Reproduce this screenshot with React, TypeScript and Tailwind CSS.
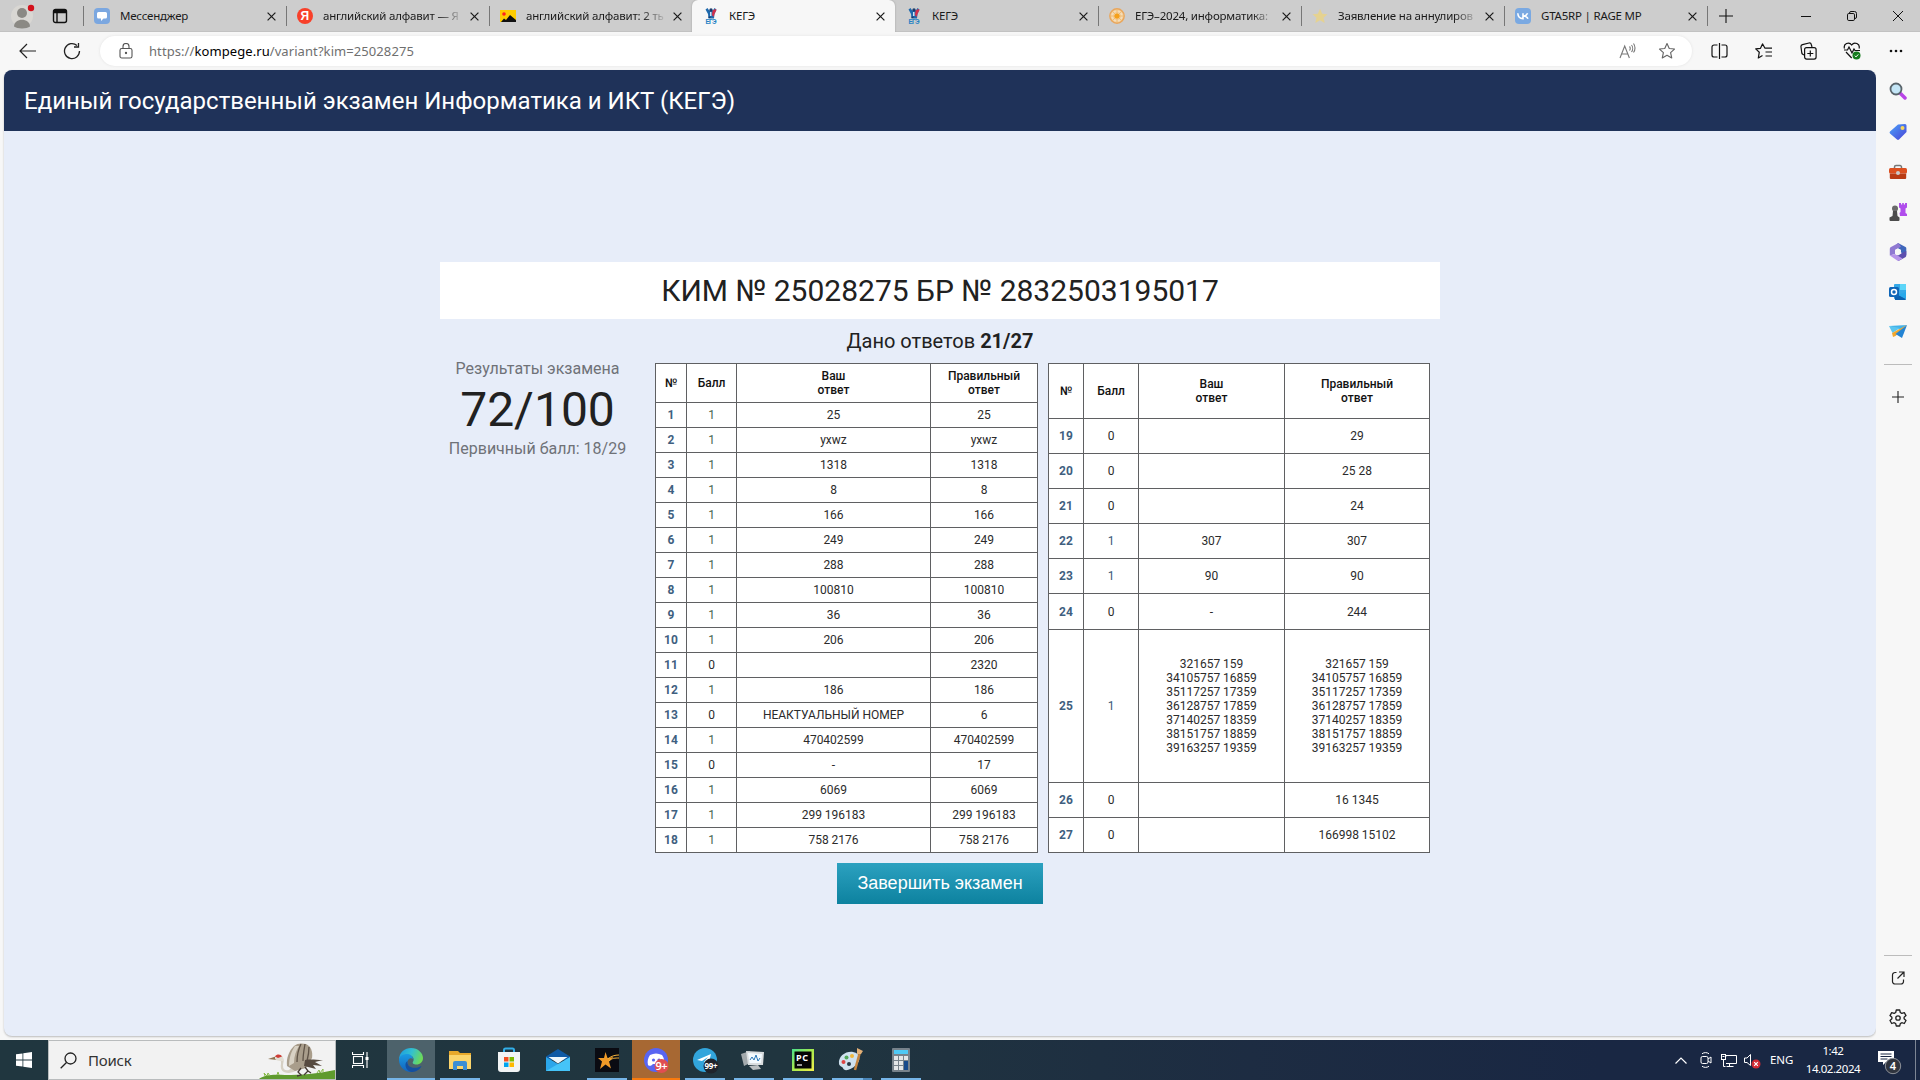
import React from "react";

type Row = [number, number, string, string];

const leftRows: Row[] = [
  [1, 1, "25", "25"],
  [2, 1, "yxwz", "yxwz"],
  [3, 1, "1318", "1318"],
  [4, 1, "8", "8"],
  [5, 1, "166", "166"],
  [6, 1, "249", "249"],
  [7, 1, "288", "288"],
  [8, 1, "100810", "100810"],
  [9, 1, "36", "36"],
  [10, 1, "206", "206"],
  [11, 0, "", "2320"],
  [12, 1, "186", "186"],
  [13, 0, "НЕАКТУАЛЬНЫЙ НОМЕР", "6"],
  [14, 1, "470402599", "470402599"],
  [15, 0, "-", "17"],
  [16, 1, "6069", "6069"],
  [17, 1, "299 196183", "299 196183"],
  [18, 1, "758 2176", "758 2176"],
];

const long25 =
  "321657 159\n34105757 16859\n35117257 17359\n36128757 17859\n37140257 18359\n38151757 18859\n39163257 19359";

const rightRows: Row[] = [
  [19, 0, "", "29"],
  [20, 0, "", "25 28"],
  [21, 0, "", "24"],
  [22, 1, "307", "307"],
  [23, 1, "90", "90"],
  [24, 0, "-", "244"],
  [25, 1, long25, long25],
  [26, 0, "", "16 1345"],
  [27, 0, "", "166998 15102"],
];

function Cell({ children, className = "" }: { children?: React.ReactNode; className?: string }) {
  return (
    <div className={`flex items-center justify-center whitespace-pre-line border-r border-b border-[#5f6062] text-center ${className}`}>
      {children}
    </div>
  );
}

function ResultTable({ rows, grid, scoreOne }: { rows: Row[]; grid: string; scoreOne: string }) {
  return (
    <div className={`grid border-t border-l border-[#5f6062] bg-white text-[12px] leading-[14px] text-[#2b2b2b] ${grid}`}>
      <Cell className="font-medium text-[#111]">№</Cell>
      <Cell className="font-medium text-[#111]">Балл</Cell>
      <Cell className="font-medium text-[#111]">{"Ваш\nответ"}</Cell>
      <Cell className="font-medium text-[#111]">{"Правильный\nответ"}</Cell>
      {rows.map(([n, score, given, right]) => (
        <React.Fragment key={n}>
          <Cell className="font-bold text-[#3f5f80]">{n}</Cell>
          <Cell className={score ? scoreOne : ""}>{score}</Cell>
          <Cell>{given}</Cell>
          <Cell>{right}</Cell>
        </React.Fragment>
      ))}
    </div>
  );
}

function CloseX() {
  return (
    <svg width="9" height="9" viewBox="0 0 9 9" stroke="#1a1a1a" strokeWidth="1.200" className="shrink-0">
      <path d="M.6.6l7.800 7.800M8.400.6L.6 8.400" />
    </svg>
  );
}

function KegeIcon() {
  return (
    <svg width="16" height="16" viewBox="0 0 16 16">
      <path d="M2.500 1.500L4.500 0l1.700 2.500h3.600L11.500 0l2 1.500-2 4.500-.5 4.500H5.500L5 6z" fill="#1e69ad" />
      <path d="M9.500 2.500L12.500 1l1 1-2 4-.8 3-1.700-2z" fill="#d2304c" />
      <circle cx="8" cy="1.900" r="1.700" fill="#1a3c6c" />
      <path d="M7 4h1.500v4H7z" fill="#cfe3f3" />
      <path d="M5.500 8.500h2V10h-2z" fill="#173a6b" />
      <text x="8" y="16" fontSize="6.500" fontWeight="700" textAnchor="middle" fill="#2480c4" fontFamily="Liberation Sans, sans-serif" textLength="11">ЕГЭ</text>
    </svg>
  );
}

const tabIcons: Record<string, React.ReactNode> = {
  msg: (
    <svg width="16" height="16" viewBox="0 0 16 16">
      <rect width="16" height="16" rx="4" fill="#7ba7e0" />
      <path d="M4.500 4h7A1.500 1.500 0 0113 5.500v3.500a1.500 1.500 0 01-1.500 1.500H9.500L7 13v-2.500H4.500A1.500 1.500 0 013 9V5.500A1.500 1.500 0 014.500 4z" fill="#fff" />
    </svg>
  ),
  ya: (
    <svg width="16" height="16" viewBox="0 0 16 16">
      <circle cx="8" cy="8" r="8" fill="#f8402a" />
      <text x="7.700" y="12.300" fontSize="12" fontWeight="700" textAnchor="middle" fill="#fff" fontFamily="Liberation Sans, sans-serif">Я</text>
    </svg>
  ),
  pic: (
    <svg width="16" height="16" viewBox="0 0 16 16">
      <rect y="2" width="16" height="12" fill="#fc0" />
      <path d="M1 14l3-3.500 2 1.500 4-5 6 5v2z" fill="#111" />
      <circle cx="4" cy="6" r="1.800" fill="#f22" />
    </svg>
  ),
  kege: <KegeIcon />,
  wheel: (
    <svg width="16" height="16" viewBox="0 0 16 16">
      <circle cx="8" cy="8" r="7.200" fill="#f3cf9c" stroke="#e9a65c" strokeWidth="1.400" />
      <circle cx="8" cy="8" r="5" fill="none" stroke="#f6dfbd" strokeWidth="1.200" />
      <g stroke="#efb565" strokeWidth=".8">
        <path d="M8 1v14M1 8h14M3 3l10 10M13 3L3 13" />
      </g>
      <circle cx="8" cy="8" r="2.600" fill="#f5a01a" />
    </svg>
  ),
  star: (
    <svg width="16" height="16" viewBox="0 0 16 16">
      <path d="M8 .8l2.200 4.900 5.300.5-4 3.600 1.200 5.300L8 12.300l-4.700 2.800 1.200-5.300-4-3.600 5.300-.5z" fill="#e5d291" />
    </svg>
  ),
  vk: (
    <svg width="16" height="16" viewBox="0 0 16 16">
      <rect width="16" height="16" rx="4" fill="#7aa9e2" />
      <path d="M2.800 5.300c.2 3.500 1.800 5.400 5.200 5.400V5.300M12.600 5.300C11.800 7.200 10 8 8.500 8c2 0 3.700 1 4.500 2.800" fill="none" stroke="#fff" strokeWidth="1.600" />
    </svg>
  ),
};

const tabs = [
  { icon: "msg", title: "Мессенджер" },
  { icon: "ya", title: "английский алфавит — Я", fade: true },
  { icon: "pic", title: "английский алфавит: 2 ть", fade: true },
  { icon: "kege", title: "КЕГЭ", active: true },
  { icon: "kege", title: "КЕГЭ" },
  { icon: "wheel", title: "ЕГЭ–2024, информатика:", fade: true },
  { icon: "star", title: "Заявление на аннулиров", fade: true },
  { icon: "vk", title: "GTA5RP | RAGE MP" },
];

function TabBar() {
  return (
    <div className="flex h-8 shrink-0 bg-[#cdcdcd] shadow-[inset_0_-1px_0_#c2c2c2]">
      <div className="flex w-[83px] items-center">
        <svg width="24" height="24" viewBox="0 0 24 24" className="ml-[10px] mt-px overflow-visible">
          <circle cx="12" cy="11" r="11" fill="#d9d7d3" />
          <circle cx="12" cy="8" r="5" fill="#8b8984" />
          <path d="M4 21.500c0-9 16-9 16 0-3 2.500-13 2.500-16 0z" fill="#8b8984" />
          <circle cx="21" cy="3" r="3.200" fill="#d3101c" />
        </svg>
        <svg width="16" height="16" viewBox="0 0 16 16" className="ml-[18px]" fill="none" stroke="#111" strokeWidth="1.400">
          <rect x="1.500" y="1.500" width="13" height="13" rx="2" />
          <path d="M2 3.500h12" strokeWidth="3.500" />
          <path d="M5 4v10" />
        </svg>
      </div>
      {tabs.map((t, i) => (
        <div
          key={i}
          className={`flex w-[203px] items-center pl-[11px] pr-[10px] ${
            t.active
              ? "rounded-t-[6px] bg-[#f7f7f7] shadow-[0_0_2px_#999]"
              : i === 4
                ? ""
                : "bg-[linear-gradient(#777,#777)] bg-[length:1px_20px] bg-[position:0_6px] bg-no-repeat"
          }`}
        >
          <span className="flex w-4 shrink-0 justify-center">{tabIcons[t.icon]}</span>
          <span
            className={`ml-[10px] w-[144px] whitespace-nowrap font-['Noto_Sans'] text-[11.5px] leading-4 tracking-[-0.2px] text-[#1a1a1a] ${
              t.fade ? "[mask-image:linear-gradient(to_right,#000_116px,transparent_141px)]" : ""
            }`}
          >
            {t.title}
          </span>
          <span className="ml-auto">
            <CloseX />
          </span>
        </div>
      ))}
      <div className="flex grow items-center bg-[linear-gradient(#777,#777)] bg-[length:1px_20px] bg-[position:0_6px] bg-no-repeat pl-[12px]">
        <svg width="14" height="14" viewBox="0 0 14 14" stroke="#111" strokeWidth="1.100">
          <path d="M7 0v14M0 7h14" />
        </svg>
        <svg width="10" height="10" viewBox="0 0 10 10" stroke="#111" className="ml-[68px]">
          <path d="M0 5.500h10" />
        </svg>
        <svg width="10" height="10" viewBox="0 0 10 10" fill="none" stroke="#111" className="ml-[36px]">
          <rect x=".5" y="2.500" width="7" height="7" rx="1.300" />
          <path d="M2.500 2.500V2A1.500 1.500 0 014 .5h3.500a2 2 0 012 2V6A1.500 1.500 0 018 7.500h-.5" />
        </svg>
        <svg width="10" height="10" viewBox="0 0 10 10" stroke="#111" className="ml-[36px]">
          <path d="M0 0l10 10M10 0L0 10" />
        </svg>
      </div>
    </div>
  );
}

function AddressBar() {
  return (
    <div className="flex h-[38px] shrink-0 items-center bg-[#f7f7f7]">
      <svg width="18" height="16" viewBox="0 0 18 16" fill="none" stroke="#222" strokeWidth="1.200" className="ml-[19px]">
        <path d="M17 8H1.500M8 1L1 8l7 7" />
      </svg>
      <svg width="18" height="18" viewBox="0 0 18 18" fill="none" stroke="#222" strokeWidth="1.300" className="ml-[26px]">
        <path d="M16.500 9A7.500 7.500 0 1114 3.500M15.500 1v4h-4.500" />
      </svg>
      <div className="ml-[19px] flex h-[30px] w-[1592px] items-center rounded-full bg-white shadow-[0_0_3px_#e2e2e2]">
        <svg width="14" height="16" viewBox="0 0 14 16" fill="none" stroke="#555" strokeWidth="1.100" className="ml-[19px]">
          <rect x="1" y="5.500" width="12" height="9.500" rx="1.800" />
          <path d="M4 5.500V3.500a3 3 0 016 0v2" />
          <circle cx="7" cy="10" r=".6" fill="#555" />
        </svg>
        <span className="ml-4 font-['Noto_Sans'] text-[13px] leading-4 tracking-[0.080px] text-[#6f6f6f]">
          https://<span className="text-black">kompege.ru</span>/variant?kim=25028275
        </span>
        <svg width="17" height="16" viewBox="0 0 17 16" fill="none" stroke="#777" strokeWidth="1.100" className="ml-auto">
          <path d="M1 15L5.700 3l4.700 12M2.600 11h6.200M10.500 3.500c1 1 1 3 0 4M12.500 2c1.500 1.800 1.500 5 0 7M14.500.5c2 2.500 2 6.500 0 9" />
        </svg>
        <svg width="18" height="18" viewBox="0 0 24 24" fill="none" stroke="#666" strokeWidth="1.500" strokeLinejoin="round" className="ml-[22px] mr-[16px]">
          <path d="M12 2l3 6.600 7 .8-5.200 4.800 1.500 7.100L12 17.700l-6.300 3.600 1.500-7.100L2 9.400l7-.8z" />
        </svg>
      </div>
      <div className="flex grow items-center pl-[19px]">
        <svg width="17" height="16" viewBox="0 0 17 16" fill="none" stroke="#111" strokeWidth="1.200">
          <path d="M8.500 0v16M6.500 2H3a2 2 0 00-2 2v8a2 2 0 002 2h3.500M10.500 2H14a2 2 0 012 2v8a2 2 0 01-2 2h-3.500" />
        </svg>
        <svg width="18" height="16" viewBox="0 0 18 16" fill="none" stroke="#111" strokeWidth="1.200" strokeLinejoin="round" className="ml-[27px]">
          <path d="M10 5.200L7.500.9 5.500 5.300l-4.800.6 3.600 3.300L3.300 15l4.200-2.500M9.500 5.200H17M10.500 9H17M10.500 13H17" />
        </svg>
        <svg width="17" height="18" viewBox="0 0 17 18" fill="none" stroke="#111" strokeWidth="1.200" className="ml-[27px]">
          <rect x="4.600" y="5.600" width="11.500" height="11.500" rx="2" />
          <path d="M10.300 8.500v6M7.300 11.500h6M4 13l-1.300-.8a2 2 0 01-.9-1.200L1 5a2 2 0 011.500-2.300L9 1a2 2 0 012.300 1.500L12 5" />
        </svg>
        <svg width="19" height="20" viewBox="0 0 19 20" fill="none" stroke="#111" strokeWidth="1.200" className="ml-[26px]">
          <path d="M1.500 7.500C0 3 6 0 8.700 4c2.700-4 8.800-1 7.300 3.500M3 11l5.700 6M1 9h3.500l1.500-3 3 6 2-4 1 1.500h5" />
          <circle cx="13.500" cy="14.500" r="4" fill="#137c1c" stroke="none" />
          <path d="M11.800 14.700l1.200 1.200 2.300-2.500" stroke="#fff" strokeWidth="1" />
        </svg>
        <svg width="14" height="4" viewBox="0 0 14 4" fill="#111" className="ml-[27px]">
          <circle cx="2" cy="2" r="1.300" />
          <circle cx="7" cy="2" r="1.300" />
          <circle cx="12" cy="2" r="1.300" />
        </svg>
      </div>
    </div>
  );
}

function Slot({ children }: { children: React.ReactNode }) {
  return <div className="flex h-10 items-center justify-center">{children}</div>;
}

function EdgeSidebar() {
  return (
    <div className="flex w-11 flex-col bg-[#f7f7f7] pt-[2px]">
      <Slot>
        <svg width="18" height="18" viewBox="0 0 18 18" className="-mt-[2px] mr-px">
          <path d="M11 11l5 5" stroke="#b844e6" strokeWidth="3.500" strokeLinecap="round" />
          <circle cx="7" cy="7" r="5.500" fill="#c4e6f7" stroke="#59646b" strokeWidth="1.800" />
        </svg>
      </Slot>
      <Slot>
        <svg width="18" height="18" viewBox="0 0 18 18">
          <defs>
            <linearGradient id="tag" x1="0" y1="0" x2="1" y2="1">
              <stop offset="0" stopColor="#4ba3fa" />
              <stop offset="1" stopColor="#4b42d6" />
            </linearGradient>
          </defs>
          <path d="M9 1.500L16 1a1.500 1.500 0 011.500 1.500V9L10 16.500a1.500 1.500 0 01-2 0L1 10.500a1.500 1.500 0 010-2z" fill="url(#tag)" />
          <circle cx="13.500" cy="5" r="2" fill="#f9d65b" />
        </svg>
      </Slot>
      <Slot>
        <svg width="18" height="16" viewBox="0 0 18 16">
          <path d="M5.500 4.500V3A1.500 1.500 0 017 1.500h4A1.500 1.500 0 0112.500 3v1.500" fill="none" stroke="#777" strokeWidth="1.500" />
          <rect y="4" width="18" height="5.500" rx="1.500" fill="#dc5020" />
          <path d="M.8 9.500h16.400V14a1 1 0 01-1 1H1.800a1 1 0 01-1-1z" fill="#b93b14" />
          <circle cx="9" cy="9" r="2" fill="#ccc" />
        </svg>
      </Slot>
      <Slot>
        <svg width="18" height="18" viewBox="0 0 18 18">
          <path d="M10 0h2v1.500h1.200V0h1.600v1.500H16V0h2v4.500l-1.500 1V10l1.500 1v2h-7l-.5-3 1-1V5.500l-1.500-1z" fill="#b04dec" />
          <circle cx="6" cy="5.500" r="3" fill="#6a6a6a" />
          <path d="M4 8h4l.5 5 2 1.500V17a1 1 0 01-1 1h-8a1 1 0 01-1-1v-2.500l3-1.500z" fill="#4b4b4b" />
        </svg>
      </Slot>
      <Slot>
        <svg width="18" height="18" viewBox="0 0 18 18">
          <path d="M9 0l7.500 4a1.500 1.500 0 01.8 1.300V12L12 9.500V7L5.500 4z" fill="#3f66bb" />
          <path d="M9.500 0L2 4a2 2 0 00-1.200 2v6.500L6 11V7l6-3.300z" fill="#8f79d2" />
          <path d="M17.300 8v4.500a2 2 0 01-1 1.700L9.500 18 6 13l6-2.500z" fill="#5c4fae" />
          <path d="M.8 12.500L9 18l4.500-2.600L6 11z" fill="#b794ea" />
          <path d="M6 7l3-1.700L12 7v3.800l-3 1.700-3-1.700z" fill="#f7f7f7" />
        </svg>
      </Slot>
      <Slot>
        <svg width="18" height="18" viewBox="0 0 18 18">
          <rect x="5" y="1" width="12" height="15" rx="1" fill="#35a9e8" />
          <path d="M11 1h6v6h-6z" fill="#5cd5f8" />
          <path d="M5 9l12 7a1 1 0 01-1 1H6z" fill="#0a60af" />
          <path d="M17 9v7L9 12z" fill="#28a8ea" />
          <rect y="4" width="10" height="10" rx="1.500" fill="#0f66b8" />
          <circle cx="5" cy="9" r="2.500" fill="none" stroke="#fff" strokeWidth="1.500" />
        </svg>
      </Slot>
      <Slot>
        <svg width="18" height="16" viewBox="0 0 18 16">
          <path d="M0 2l18-1-6.500 5z" fill="#43b2ea" />
          <path d="M0 2l11 2-7.500 5z" fill="#5bc5ef" />
          <path d="M3 9L18 1 6.500 12 4 13z" fill="#f2a72e" />
          <path d="M18 1l-5 13-6.500-4z" fill="#2384d4" />
        </svg>
      </Slot>
      <div className="mx-2 mt-[12px] h-px bg-[#bcbcbc]" />
      <div className="mt-[26px] flex justify-center">
        <svg width="12" height="12" viewBox="0 0 12 12" stroke="#222" strokeWidth="1.100">
          <path d="M6 0v12M0 6h12" />
        </svg>
      </div>
      <div className="mx-2 mt-auto h-px bg-[#bcbcbc]" />
      <div className="mt-[2px]">
        <Slot>
          <svg width="14" height="14" viewBox="0 0 14 14" fill="none" stroke="#222" strokeWidth="1.200">
            <path d="M5.500 1.500H4A2.500 2.500 0 001.500 4v6.500A2.500 2.500 0 004 13h6a2.500 2.500 0 002.500-2.500V8.500M8 1h5v5M13 1L6.500 7.500" />
          </svg>
        </Slot>
        <Slot>
          <svg width="18" height="18" viewBox="0 0 18 18" fill="none" stroke="#222" strokeWidth="1.300" strokeLinejoin="round">
            <path d="M7.300 1h3.400l.6 2.500 1.500.9 2.500-.8 1.700 3-1.900 1.700v1.500l1.900 1.700-1.700 3-2.500-.8-1.500.9-.6 2.400H7.300l-.6-2.400-1.500-.9-2.500.8-1.700-3 1.900-1.700V8.300L1 6.600l1.700-3 2.500.8 1.500-.9z" />
            <circle cx="9" cy="9" r="2.200" />
          </svg>
        </Slot>
      </div>
      <div className="h-[2px]" />
    </div>
  );
}

function ExamPage() {
  return (
    <div className="ml-1 flex h-[966px] w-[1872px] flex-col overflow-hidden rounded-[8px] bg-[#e7edf9] font-['Roboto'] shadow-[0_1px_2px_#bbb]">
      <header className="flex h-[61px] shrink-0 items-center bg-[#1f3259] pl-5 text-[24px] text-white">
        Единый государственный экзамен Информатика и ИКТ (КЕГЭ)
      </header>
      <main className="mx-auto mt-[131px] flex w-[1000px] flex-col">
        <h1 className="flex h-[57px] items-center justify-center bg-white text-[30px] text-[#212121]">
          КИМ № 25028275 БР № 2832503195017
        </h1>
        <p className="flex h-[44px] items-center justify-center whitespace-pre text-[20px] text-[#212121]">
          Дано ответов <b className="font-bold">21/27</b>
        </p>
        <div className="flex">
          <section className="flex w-[215px] flex-col items-center pr-[20px] text-[16px] text-[#6f7278]">
            <div className="-mt-[3px] leading-[18px]">Результаты экзамена</div>
            <div className="mt-[4px] text-[48px] leading-[56px] text-[#212121]">72/100</div>
            <div className="mt-[2px] leading-[18px]">Первичный балл: 18/29</div>
          </section>
          <ResultTable
            rows={leftRows}
            scoreOne="text-[#49674f]"
            grid="grid-cols-[31px_50px_194px_107px] grid-rows-[39px_repeat(18,25px)]"
          />
          <div className="w-[10px]" />
          <ResultTable
            rows={rightRows}
            scoreOne="text-[#3d5a78]"
            grid="grid-cols-[35px_55px_146px_145px] grid-rows-[55px_repeat(5,35px)_36px_153px_35px_35px]"
          />
        </div>
        <button className="mx-auto mt-[10px] h-[41px] w-[206px] bg-[linear-gradient(#2ca1c0,#0d829f)] pb-px font-['Liberation_Sans'] text-[18px] text-white">
          Завершить экзамен
        </button>
      </main>
    </div>
  );
}

function Crane() {
  return (
    <svg width="76" height="38" viewBox="0 0 76 38">
      <path d="M0 38c4-4 14-5 26-4 16 0 32-1 50-5v9z" fill="#5f9a2e" />
      <path d="M6 35l-1-3 3 3 1-3 2 3M18 34l1-3 1 3M58 32l2-3 1 3 3-4 0 3" stroke="#86b847" fill="none" />
      <path d="M9 18l9-3v4z" fill="#8d7350" />
      <path d="M23 16c3 2 1 6 1 9 0 4 3 5 6 4 3-2 5-7 10-9l5 4c-4 4-9 7-15 8-7 0-9-4-8-9 0-3 0-4-2-5z" fill="#d6d0c4" />
      <path d="M16 16c2-3 6-3 8 0v4c-3 0-6 0-8-2z" fill="#e2ddd3" />
      <path d="M16 15.500c2-3 6-2 7 0l-4 1.500z" fill="#cf3d36" />
      <path d="M28 25c-1-8 2-15 7-20 3-3 8-3 12-2 5 2 7 8 6 14l-6 10-11 3z" fill="#a99d8b" />
      <path d="M36 5c-4 6-6 12-6 20l5-3c0-7 2-12 5-17z" fill="#d8d1c4" />
      <path d="M42 3c-3 6-4 11-4 18M46 3c-1 6-2 11-2 17M50 6c0 5-1 10-2 14" stroke="#5f5347" strokeWidth="1.300" fill="none" />
      <path d="M46 19c6-1 11 0 18 0l-8 2 7 4-9-1 3 4-12-3z" fill="#574a40" />
      <path d="M42 27l-3 4 3 3-4 1M46 26l3 4-4 4M49 30l3 2" stroke="#453a34" fill="none" strokeWidth="1.300" />
    </svg>
  );
}

function TaskItem({ width, underline, children, className = "" }: { width: string; underline: string; children: React.ReactNode; className?: string }) {
  return (
    <div className={`flex h-10 flex-col items-center ${width} ${className}`}>
      <div className="flex h-[38px] items-center pt-[2px]">{children}</div>
      <div className={`h-[2px] ${underline}`} />
    </div>
  );
}

function Taskbar() {
  const line = "w-10 bg-[#76b5e8]";
  return (
    <div className="flex h-10 shrink-0 bg-[linear-gradient(to_right,#20363f_0,#20353f_800px,#1d2c42_1250px,#192743_1600px)] font-['Noto_Sans'] text-white">
      <div className="flex w-12 items-center justify-center">
        <svg width="16" height="16" viewBox="0 0 16 16" fill="#fff">
          <path d="M0 2.300L6.500 1.400v6.200H0zM7.300 1.300L16 0v7.600H7.300zM0 8.400h6.500v6.200L0 13.700zM7.300 8.400H16V16l-8.700-1.300z" />
        </svg>
      </div>
      <div className="flex w-[288px] items-center border border-[#b9bcbd] bg-[#f2f2f2] pl-[11px]">
        <svg width="17" height="17" viewBox="0 0 17 17" fill="none" stroke="#222" strokeWidth="1.300">
          <circle cx="10.500" cy="6.500" r="5.500" />
          <path d="M6.500 10.500L.7 16.300" />
        </svg>
        <span className="ml-[11px] text-[15px] tracking-[-0.2px] text-[#333]">Поиск</span>
        <span className="ml-auto self-end">
          <Crane />
        </span>
      </div>
      <div className="flex w-[51px] items-center justify-center pr-[3px]">
        <svg width="17" height="18" viewBox="0 0 17 18" fill="none" stroke="#fff" strokeWidth="1.100">
          <rect x="1.500" y="5.500" width="9" height="7" />
          <path d="M.5 1v2.500h11V1M.5 17v-2.500h11V17M15 1v16" />
          <path d="M13.500 6h3v3h-3z" fill="#fff" stroke="none" />
        </svg>
      </div>
      <TaskItem width="w-12" underline="w-12 bg-[#76b5e8]" className="bg-[#4d626b]">
        <svg width="24" height="24" viewBox="0 0 24 24">
          <defs>
            <linearGradient id="edgeTop" x1="0" y1=".2" x2="1" y2=".5">
              <stop offset="0" stopColor="#1c9de0" />
              <stop offset=".5" stopColor="#33c0d0" />
              <stop offset="1" stopColor="#6edb55" />
            </linearGradient>
            <linearGradient id="edgeLeft" x1="0" y1="0" x2="0" y2="1">
              <stop offset="0" stopColor="#1b9be2" />
              <stop offset="1" stopColor="#1263bd" />
            </linearGradient>
          </defs>
          <path d="M0 12C0 4 6 0 12 0c7 0 12 5 12 10 0 4-3 6.500-6.500 6.500-3 0-4.500-1.200-3.500-2.700 2-3-.5-6.800-5-6.800-5 0-9 3-9 5z" fill="url(#edgeTop)" />
          <path d="M0 12c0-4 4-6 8-6 3 0 6 2 6 5-2-2-6 0-5.500 4 .5 4 5 6.500 9 5.500A12 12 0 0112 24C5 24 0 18 0 12z" fill="url(#edgeLeft)" />
          <path d="M8.500 13c-1 6 6 9 14 5-2 4-6 6-10.500 6-6-2-7-9-3.500-11z" fill="#144f9f" />
        </svg>
      </TaskItem>
      <TaskItem width="w-[50px]" underline={line}>
        <svg width="24" height="24" viewBox="0 0 24 24">
          <path d="M1 3h9l2 2h11v16H1z" fill="#e8a92b" />
          <path d="M1 7h22v14H1z" fill="#fbd56c" />
          <path d="M5 22v-7a2 2 0 012-2h10a2 2 0 012 2v7h-4v-4H9v4z" fill="#3b8ed4" />
        </svg>
      </TaskItem>
      <TaskItem width="w-[48px]" underline="w-0">
        <svg width="24" height="26" viewBox="0 0 24 26">
          <path d="M7 6V3a1.500 1.500 0 011.500-1.500h7A1.500 1.500 0 0117 3v3" fill="none" stroke="#31aee8" strokeWidth="2" />
          <path d="M1 5h22v17a3 3 0 01-3 3H4a3 3 0 01-3-3z" fill="#f2f4f5" />
          <path d="M7 10h4.500v4.500H7z" fill="#f25022" />
          <path d="M12.500 10H17v4.500h-4.500z" fill="#7fba00" />
          <path d="M7 15.500h4.500V20H7z" fill="#00a4ef" />
          <path d="M12.500 15.500H17V20h-4.500z" fill="#ffb900" />
        </svg>
      </TaskItem>
      <TaskItem width="w-[50px]" underline="w-0">
        <svg width="24" height="24" viewBox="0 0 24 24">
          <path d="M0 8.500L12 1l12 7.500V12H0z" fill="#0f5aa5" />
          <path d="M0 9l24 14H0z" fill="#2ba6ea" />
          <path d="M24 9v14H0z" fill="#45c4f8" />
          <path d="M2.500 9h19L12 15.500z" fill="#eef7fc" />
        </svg>
      </TaskItem>
      <TaskItem width="w-[48px]" underline={line}>
        <svg width="24" height="24" viewBox="0 0 24 24">
          <rect width="24" height="24" fill="#0a0b12" />
          <path d="M10.500 4l2 6 6-1-4.500 4.500 2 7-5.500-4-5.500 4.500 2-7.500L3 10h6z" fill="#f09a28" />
          <path d="M13 11c3-3 7-4 11-4M14 13c3-3 6-3 10-3" stroke="#f7b53d" fill="none" />
        </svg>
      </TaskItem>
      <TaskItem width="w-[48px] ml-[1px]" underline="w-12 bg-[#f97a0d]" className="bg-[#a76833]">
        <svg width="26" height="25" viewBox="0 0 26 25" className="overflow-visible">
          <circle cx="13" cy="12" r="12" fill="#5865f2" />
          <path d="M7 7c4-2 8-2 12 0 2 3 3 6 2 10-3 2-4 0-5-1h-6c-1 1-3 3-5 1-1-4 0-7 2-10z" fill="#fff" />
          <circle cx="10.500" cy="12" r="1.600" fill="#5865f2" />
          <circle cx="16" cy="12" r="1.600" fill="#5865f2" />
          <circle cx="18.500" cy="18" r="7" fill="#e04e51" />
          <text x="18.500" y="22" fontSize="11" fontWeight="600" textAnchor="middle" fill="#fff" textLength="12">9+</text>
        </svg>
      </TaskItem>
      <TaskItem width="w-[50px]" underline={line}>
        <svg width="26" height="25" viewBox="0 0 26 25" className="overflow-visible">
          <circle cx="13" cy="12" r="12" fill="#32a5dc" />
          <path d="M5 12l14-6-3 12-4-4 4-5-6 4z" fill="#fff" />
          <circle cx="19" cy="18" r="7.500" fill="#20242c" />
          <text x="19" y="21" fontSize="8" fontWeight="700" textAnchor="middle" fill="#fff" textLength="13">99+</text>
        </svg>
      </TaskItem>
      <TaskItem width="w-[48px]" underline={line}>
        <svg width="24" height="24" viewBox="0 0 24 24" className="mr-[2px]">
          <path d="M0 6l9-3v12l-6 3z" fill="#a3aaad" />
          <path d="M5 3l18 1-1 13H7z" fill="#d9dddf" />
          <path d="M7 5l14 1-1 9H8.500z" fill="#f3fafe" />
          <path d="M9 12l2-3 2 3 2-5 2 6 2-3" stroke="#2a78b8" fill="none" />
          <path d="M8 18l9-1 3 4-8 1z" fill="#b9bec0" />
        </svg>
      </TaskItem>
      <TaskItem width="w-[50px]" underline={line}>
        <svg width="22" height="22" viewBox="0 0 22 22">
          <defs>
            <linearGradient id="pc" x1="0" y1="0" x2="1" y2="1">
              <stop offset="0" stopColor="#48e08b" />
              <stop offset=".5" stopColor="#a9ea4d" />
              <stop offset="1" stopColor="#f4f04c" />
            </linearGradient>
          </defs>
          <rect width="22" height="22" fill="url(#pc)" />
          <rect x="2.500" y="2.500" width="17" height="17" fill="#050505" />
          <text x="4" y="11.500" fontSize="9" fontWeight="700" fill="#fff" textLength="12">PC</text>
          <path d="M5 16h5" stroke="#fff" strokeWidth="1.200" />
        </svg>
      </TaskItem>
      <TaskItem width="w-[48px]" underline="w-10 bg-[linear-gradient(to_right,#76b5e8_31px,#4b86b8_31px)]">
        <svg width="26" height="24" viewBox="0 0 26 24" className="mr-[2px]">
          <path d="M1 16C0 8 8 3 15 4c8 1 8 9 3 13-5 5-12 7-13 3-1-2-3-1-4-4z" fill="#cfe1ee" />
          <circle cx="5.500" cy="14" r="2" fill="#d44" />
          <circle cx="8.500" cy="9.500" r="2" fill="#52a85a" />
          <circle cx="14" cy="8" r="2" fill="#efb73c" />
          <circle cx="11" cy="16" r="2" fill="#293845" />
          <path d="M22 4l-5 18" stroke="#c6853f" strokeWidth="2.500" />
          <path d="M19 0l6 3-2 3h-4z" fill="#e3b077" />
        </svg>
      </TaskItem>
      <TaskItem width="w-[50px]" underline={line}>
        <svg width="18" height="24" viewBox="0 0 18 24">
          <rect width="18" height="24" rx="1" fill="#77828b" />
          <rect x="2" y="2" width="14" height="4" fill="#4fc9f5" />
          <path d="M2 8h4v4H2zM7 8h4v4H7zM12 8h4v4h-4zM2 13h4v4H2zM7 13h4v4H7zM2 18h4v4H2zM7 18h4v4H7z" fill="#e3e6e8" />
          <path d="M12 13h4v9h-4z" fill="#174a8c" />
        </svg>
      </TaskItem>
      <div className="ml-auto flex items-center">
        <svg width="12" height="7" viewBox="0 0 12 7" fill="none" stroke="#fff" strokeWidth="1.200">
          <path d="M.5 6.500L6 1l5.500 5.500" />
        </svg>
        <svg width="12" height="16" viewBox="0 0 12 16" fill="none" stroke="#fff" className="ml-[13px]">
          <rect x="1" y="4.500" width="7" height="7" rx="1.500" />
          <path d="M8 7l3-2v6L8 9M2 1.800C4 .2 7 .2 9 1.800M2 14.200c2 1.600 5 1.600 7 0" />
        </svg>
        <svg width="16" height="14" viewBox="0 0 16 14" fill="none" stroke="#fff" className="ml-[9px] mt-px">
          <path d="M5 2.500V1.500h10.500v8H5M8.500 9.500v3M5.500 12.500h7M2.500 5.500v7h2" />
          <rect x=".5" y=".5" width="4" height="5" />
          <path d="M1.500 2.500h2" />
        </svg>
        <svg width="18" height="16" viewBox="0 0 18 16" fill="none" stroke="#fff" className="ml-[7px] mt-px">
          <path d="M.5 5h2.500L6.500 1.500v11L3 9.500H.5z" />
          <circle cx="12" cy="11" r="4.500" fill="#d22b35" stroke="none" />
          <path d="M10.200 9.200l3.600 3.600M13.800 9.200l-3.600 3.600" strokeWidth="1.200" />
        </svg>
        <span className="ml-[8px] w-[24px] text-[11.5px] tracking-[-0.1px]">ENG</span>
        <div className="ml-[10px] flex w-[58px] flex-col items-center whitespace-nowrap text-[11.5px] leading-[18px] tracking-[-0.45px]">
          <span>1:42</span>
          <span>14.02.2024</span>
        </div>
        <svg width="26" height="26" viewBox="0 0 26 26" className="ml-[15px] mt-[4px]">
          <path d="M1 2h16v11H9l-3 3v-3H1z" fill="#fff" />
          <path d="M3.500 5h11M3.500 7.500h11M3.500 10h7" stroke="#192743" />
          <circle cx="16" cy="17" r="7.700" fill="#2f343e" stroke="#8d9199" />
          <text x="16" y="21" fontSize="11" fontWeight="600" textAnchor="middle" fill="#fff">4</text>
        </svg>
        <div className="ml-[12px] mr-[4px] h-10 w-px bg-[#7d8594]" />
      </div>
    </div>
  );
}

export default function App() {
  return (
    <div className="flex h-[1080px] w-[1920px] flex-col overflow-hidden bg-[#f7f7f7]">
      <TabBar />
      <AddressBar />
      <div className="flex h-[970px] shrink-0">
        <ExamPage />
        <EdgeSidebar />
      </div>
      <Taskbar />
    </div>
  );
}
